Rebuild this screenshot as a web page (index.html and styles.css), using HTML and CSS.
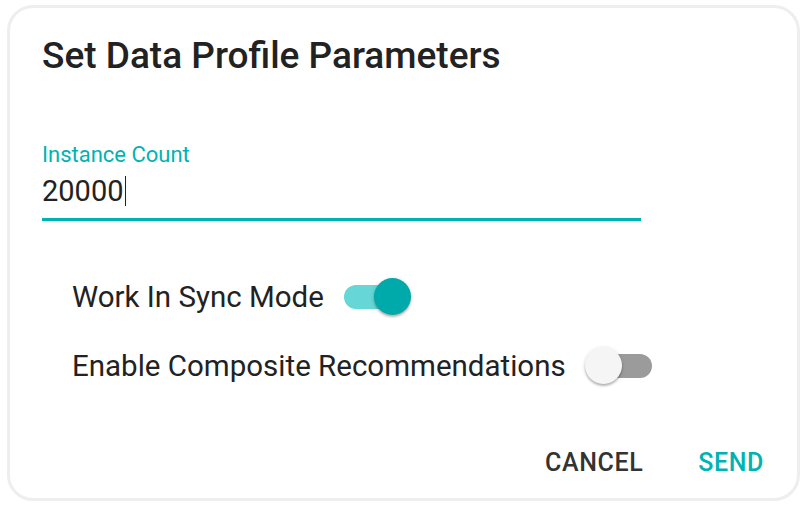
FILE: index.html
```html
<!DOCTYPE html>
<html>
<head>
<meta charset="utf-8">
<link rel="stylesheet" href="styles.css">
</head>
<body>
<div class="dialog">
  <h2 class="title">Set Data Profile Parameters</h2>
  <div class="content">
    <div class="field">
      <label class="field-label">Instance Count</label>
      <div class="field-input"><span class="value">20000</span><span class="caret"></span></div>
    </div>
    <div class="switches">
      <div class="switch-row">
        <span class="switch-label">Work In Sync Mode</span>
        <span class="switch on"><span class="track"></span><span class="thumb"></span></span>
      </div>
      <div class="switch-row">
        <span class="switch-label">Enable Composite Recommendations</span>
        <span class="switch off"><span class="track"></span><span class="thumb"></span></span>
      </div>
    </div>
  </div>
  <div class="actions">
    <button class="btn cancel">CANCEL</button>
    <button class="btn send">SEND</button>
  </div>
</div>
</body>
</html>
```
FILE: styles.css
```css
html, body {
  margin: 0;
  padding: 0;
  background: #ffffff;
}
body {
  font-family: Roboto, "Liberation Sans", sans-serif;
  color: #222222;
  padding: 5px 12px 0 7px;
}
.dialog {
  box-sizing: border-box;
  width: 793px;
  height: 496px;
  border: 3px solid #eeeeee;
  border-radius: 26px;
  padding: 0 33px 0 32px;
  display: flex;
  flex-direction: column;
}
.title {
  margin: 0;
  padding-top: 26px;
  font-size: 37px;
  line-height: 44px;
  font-weight: 500;
  color: #222222;
}
.content {
  flex: 1;
}
.field {
  margin-top: 64px;
  width: 599px;
  display: flex;
  flex-direction: column;
}
.field-label {
  font-size: 22px;
  line-height: 26px;
  color: #00b3b3;
}
.field-input {
  display: flex;
  align-items: center;
  height: 40px;
  margin-top: 3px;
  padding-bottom: 7px;
  border-bottom: 3px solid #00b3b3;
  font-size: 29px;
  color: #222222;
}
.caret {
  display: inline-block;
  width: 1.5px;
  height: 30px;
  background: #222222;
  margin-left: 1px;
}
.switches {
  margin-top: 57px;
  padding-left: 30px;
  display: flex;
  flex-direction: column;
  gap: 31px;
}
.switch-row {
  display: flex;
  align-items: center;
  gap: 19px;
  height: 38px;
}
.switch-label {
  font-size: 29.5px;
  color: #222222;
}
.switch {
  position: relative;
  width: 68px;
  height: 38px;
  display: inline-block;
  flex: none;
}
.track {
  position: absolute;
  left: 1px;
  top: 7px;
  width: 66px;
  height: 24px;
  border-radius: 12px;
}
.thumb {
  position: absolute;
  top: 0;
  width: 37px;
  height: 37px;
  border-radius: 50%;
  box-shadow: 0 2px 2px rgba(0,0,0,0.22), 0 1px 4px rgba(0,0,0,0.14);
}
.on .track { background: #66d6d6; }
.on .thumb { left: 31px; background: #00aaaa; }
.off .track { background: #9b9b9b; }
.off .thumb { left: 0; background: #f5f5f5; }
.actions {
  display: flex;
  justify-content: flex-end;
  gap: 55px;
  padding: 0 0 21px;
}
.btn {
  border: none;
  background: none;
  font-family: Roboto, "Liberation Sans", sans-serif;
  font-weight: 500;
  font-size: 25px;
  line-height: normal;
  letter-spacing: 0.6px;
  padding: 0;
  cursor: pointer;
}
.cancel { color: #333333; }
.send { color: #00b3b3; }
```
